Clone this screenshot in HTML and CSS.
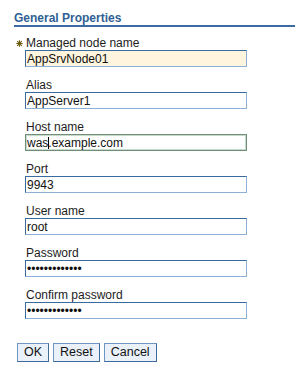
FILE: index.html
```html
<!DOCTYPE html>
<html>
<head>
<meta charset="utf-8">
<link rel="stylesheet" href="styles.css">
</head>
<body>
<div class="panel">
  <h2 class="section-title">General Properties</h2>
  <form class="props">
    <div class="field">
      <label class="label"><span class="req"><svg width="7" height="7" viewBox="0 0 7 7"><path d="M3.5 0.3V6.7M0.3 3.5H6.7M1.2 1.2L5.8 5.8M5.8 1.2L1.2 5.8" stroke="#6e5d10" stroke-width="1.1"/></svg></span>Managed node name</label>
      <input class="input required" type="text" value="AppSrvNode01">
    </div>
    <div class="field">
      <label class="label">Alias</label>
      <input class="input" type="text" value="AppServer1">
    </div>
    <div class="field">
      <label class="label">Host name</label>
      <div class="input-wrap">
        <input class="input focused" type="text" value="was.example.com">
        <span class="caret"></span>
      </div>
    </div>
    <div class="field">
      <label class="label">Port</label>
      <input class="input" type="text" value="9943">
    </div>
    <div class="field">
      <label class="label">User name</label>
      <input class="input" type="text" value="root">
    </div>
    <div class="field">
      <label class="label">Password</label>
      <input class="input" type="password" value="abcdefghijklm">
    </div>
    <div class="field">
      <label class="label">Confirm password</label>
      <input class="input" type="password" value="abcdefghijklm">
    </div>
    <div class="buttons">
      <button type="button" class="btn">OK</button>
      <button type="button" class="btn">Reset</button>
      <button type="button" class="btn">Cancel</button>
    </div>
  </form>
</div>
</body>
</html>
```
FILE: styles.css
```css
html, body {
  margin: 0;
  padding: 0;
  background: #ffffff;
}
body {
  font-family: "Liberation Sans", Arial, sans-serif;
  color: #1c1c1c;
  font-size: 12px;
}
.panel {
  padding-top: 11px;
}
.section-title {
  margin: 0 0 0 14px;
  font-size: 12px;
  line-height: 14px;
  font-weight: bold;
  color: #2f5f94;
  border-bottom: 2px solid #3a6ca3;
}
.props {
  margin: 0;
  padding: 9px 0 0 25px;
}
.field {
  display: flex;
  flex-direction: column;
  margin-bottom: 11px;
}
.label {
  position: relative;
  display: block;
  font-size: 12px;
  line-height: 14px;
  padding-left: 1px;
  color: #1c1c1c;
}
.req {
  position: absolute;
  left: -9px;
  top: 4px;
  width: 7px;
  height: 7px;
  display: block;
}
.req svg {
  display: block;
}
.input {
  box-sizing: border-box;
  width: 222px;
  height: 17px;
  margin: 0;
  padding: 0 1px;
  font-family: "Liberation Sans", Arial, sans-serif;
  font-size: 12px;
  color: #111;
  background: #ffffff;
  border: 1px solid;
  border-color: #3b6a9f #8cb0d6 #8cb0d6 #3b6a9f;
  outline: none;
}
.input.required {
  background: #fff5de;
}
.input.focused {
  border: 1px solid #6f9077;
  box-shadow: inset 0 0 0 1px #c9d8cc;
}
.input-wrap {
  position: relative;
  width: 222px;
  height: 17px;
}
.caret {
  position: absolute;
  left: 23px;
  top: 3px;
  width: 1px;
  height: 12px;
  background: #000;
}
.buttons {
  display: flex;
  gap: 4px;
  margin-left: -8px;
  padding-top: 13px;
}
.btn {
  box-sizing: border-box;
  height: 19px;
  margin: 0;
  padding: 0 6px;
  font-family: "Liberation Sans", Arial, sans-serif;
  font-size: 12.5px;
  line-height: 17px;
  color: #111;
  background: #eaf1fb;
  border: 1px solid;
  border-color: #6f95c2 #3f6a9c #3f6a9c #6f95c2;
  border-radius: 0;
}
```
